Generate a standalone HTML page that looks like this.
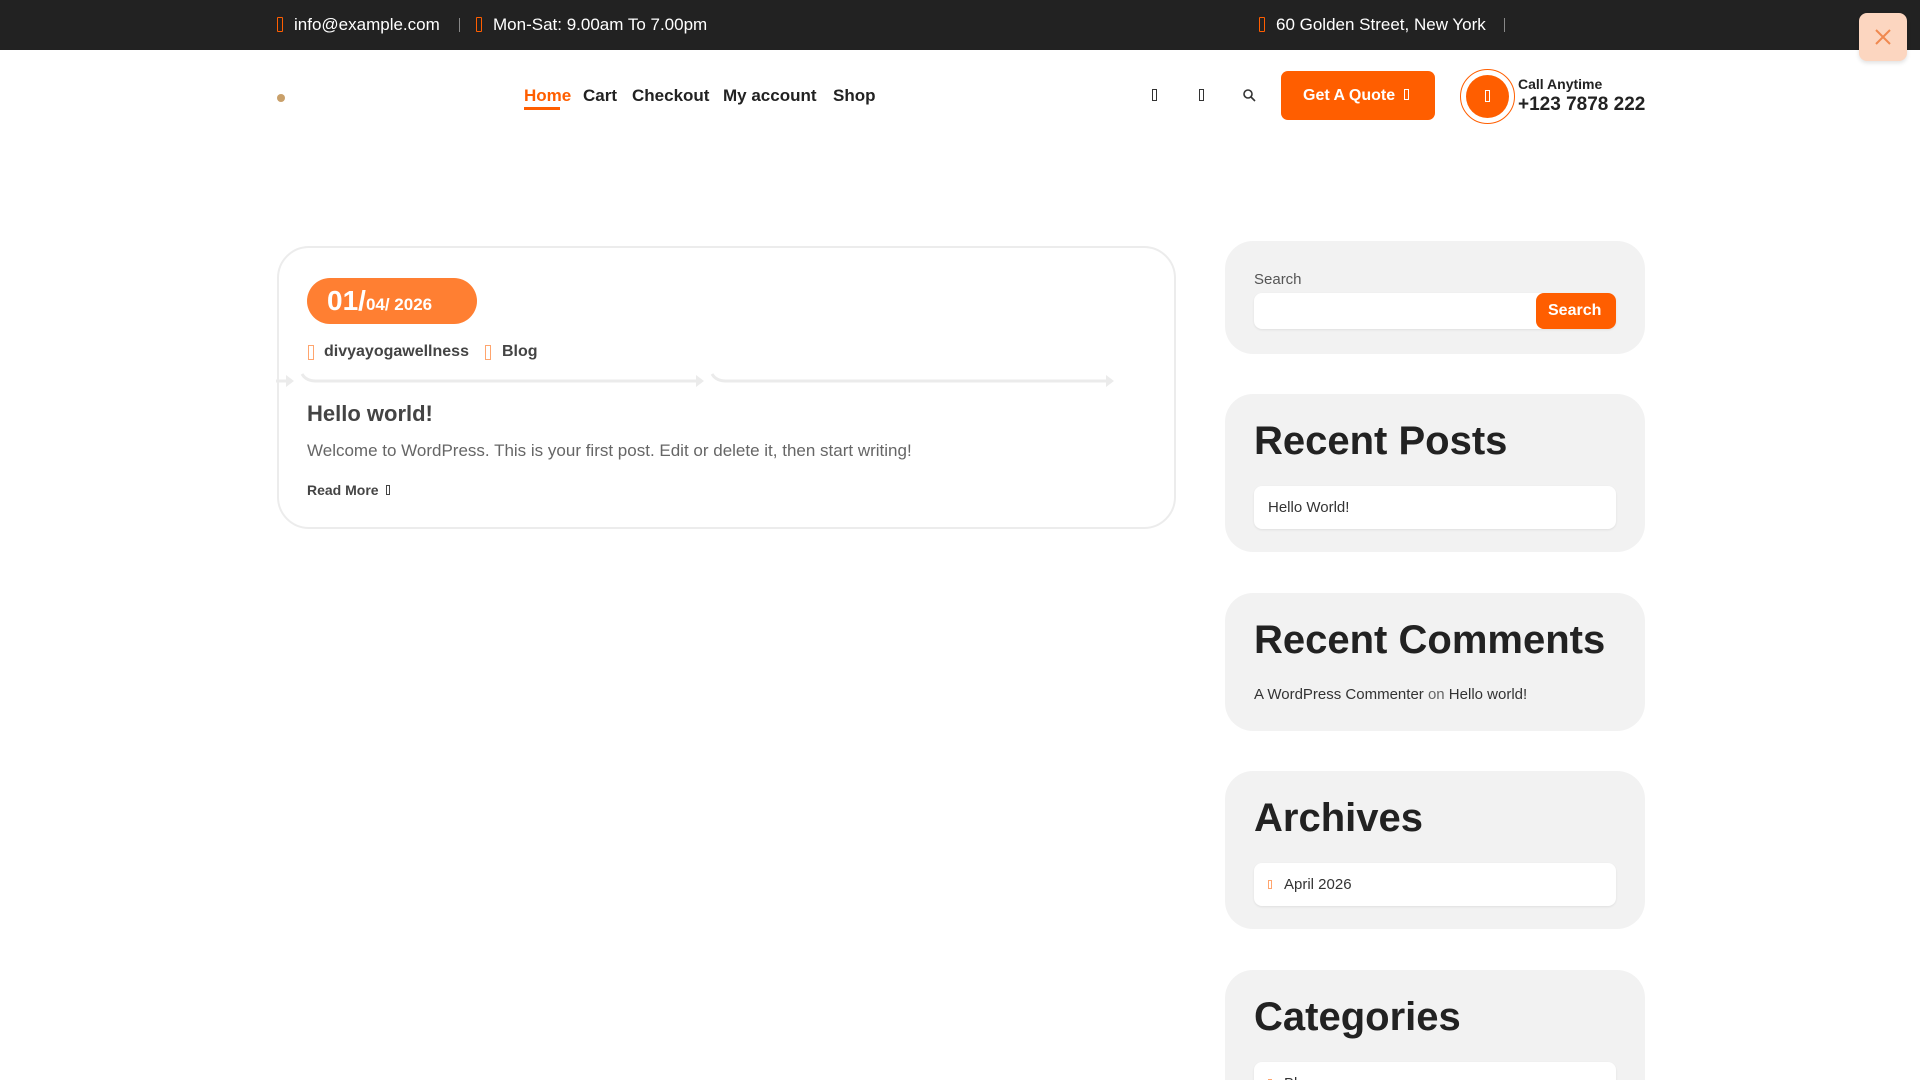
<!DOCTYPE html>
<html style="width:1920px;height:1080px;overflow:hidden"><head><meta charset="utf-8"><style>
*{margin:0;padding:0;box-sizing:border-box}
body{width:1920px;height:1080px;overflow:hidden;background:#fff;font-family:"Liberation Sans",sans-serif;color:#222;position:relative}
.a{position:absolute;white-space:nowrap}
.top{position:absolute;left:0;top:0;width:1920px;height:50px;background:#222}
.top .a{color:#fff;font-size:17px;top:15px}
.ic{display:inline-block;width:6px;height:15px;border:1.5px solid #ff5e00;border-radius:1px}
.sep{position:absolute;top:18px;width:1px;height:14px;background:#888}
.nav{font-size:17px;font-weight:bold;color:#222;top:86px}
.w{position:absolute;left:1225px;width:420px;background:#f2f2f2;border-radius:28px}
.wt{position:absolute;left:29px;font-size:40px;font-weight:bold;color:#222}
.box{position:absolute;left:29px;width:362px;height:43px;background:#fff;border-radius:8px;box-shadow:0 1px 2px rgba(0,0,0,.08);font-size:15px;color:#333;padding:13px 0 0 14px}
</style></head><body>
<div class="top">
<span class="a ic" style="left:277px;top:17px;position:absolute"></span>
<span class="a" style="left:294px">info@example.com</span>
<div class="sep" style="left:459px"></div>
<span class="a ic" style="left:476px;top:17px;position:absolute"></span>
<span class="a" style="left:493px">Mon-Sat: 9.00am To 7.00pm</span>
<span class="a ic" style="left:1259px;top:17px;position:absolute"></span>
<span class="a" style="left:1276px">60 Golden Street, New York</span>
<div class="sep" style="left:1504px"></div>
</div>
<div class="a" style="left:1859px;top:13px;width:48px;height:48px;background:#fcd6c0;border-radius:8px;box-shadow:0 2px 4px rgba(0,0,0,.12)">
<svg width="48" height="48" viewBox="0 0 48 48"><path d="M17 17L31 31M31 17L17 31" stroke="#f0894f" stroke-width="2"/></svg></div>
<div class="a" style="left:277px;top:94px;width:8px;height:8px;border-radius:50%;background:#c9a06a"></div>
<span class="a nav" style="left:524px;color:#ff5e00">Home</span>
<div class="a" style="left:524px;top:107px;width:36px;height:3px;background:#ff5e00"></div>
<span class="a nav" style="left:583px">Cart</span>
<span class="a nav" style="left:632px">Checkout</span>
<span class="a nav" style="left:723px">My account</span>
<span class="a nav" style="left:833px">Shop</span>
<span class="a" style="left:1152px;top:89px;width:5px;height:12px;border:1px solid #333"></span>
<span class="a" style="left:1199px;top:89px;width:5px;height:12px;border:1px solid #333"></span>
<svg class="a" style="left:1241px;top:87px" width="16" height="16" viewBox="0 0 16 16"><circle cx="7" cy="7" r="4" fill="none" stroke="#333" stroke-width="1.6"/><path d="M10 10L14 14" stroke="#333" stroke-width="1.6"/></svg>
<div class="a" style="left:1281px;top:71px;width:154px;height:49px;background:#ff5e00;border-radius:7px;color:#fff;font-size:16px;font-weight:bold;padding:16px 0 0 22px">Get A Quote &nbsp;<span style="display:inline-block;width:5px;height:11px;border:1px solid #fff"></span></div>
<div class="a" style="left:1460px;top:69px;width:55px;height:55px;border-radius:50%;border:1.5px solid #ff5e00"></div>
<div class="a" style="left:1466px;top:75px;width:43px;height:43px;border-radius:50%;background:#ff5e00"></div>
<span class="a" style="left:1485px;top:90px;width:5px;height:12px;border:1px solid #fff"></span>
<span class="a" style="left:1518px;top:76px;font-size:14px;font-weight:bold">Call Anytime</span>
<span class="a" style="left:1518px;top:94px;font-size:19px;font-weight:bold">+123 7878 222</span>

<div class="a" style="left:277px;top:246px;width:899px;height:283px;border:2px solid #ececec;border-radius:32px"></div>
<div class="a" style="left:307px;top:278px;width:170px;height:46px;background:#ff7f32;border-radius:23px;color:#fff;font-weight:bold;padding:7px 0 0 20px"><span style="font-size:28px">01/</span><span style="font-size:17px">04/ 2026</span></div>
<span class="a" style="left:308px;top:345px;width:6px;height:15px;border:1.5px solid #ffa56e"></span>
<span class="a" style="left:324px;top:343px;font-size:16px;font-weight:bold;color:#444">divyayogawellness</span>
<span class="a" style="left:485px;top:345px;width:6px;height:15px;border:1.5px solid #ffa56e"></span>
<span class="a" style="left:502px;top:343px;font-size:16px;font-weight:bold;color:#444">Blog</span>
<svg class="a" style="left:276px;top:370px" width="850" height="22"><g stroke="#ebebeb" stroke-width="3" fill="none"><path d="M0 11H10M26 4Q30 11 40 11H420M436 4Q440 11 450 11H830"/></g><g fill="#ebebeb"><path d="M10 5L18 11L10 17Z"/><path d="M420 5L428 11L420 17Z"/><path d="M830 5L838 11L830 17Z"/></g></svg>
<span class="a" style="left:307px;top:401px;font-size:22px;font-weight:bold;color:#444">Hello world!</span>
<span class="a" style="left:307px;top:441px;font-size:17px;color:#666">Welcome to WordPress. This is your first post. Edit or delete it, then start writing!</span>
<span class="a" style="left:307px;top:482px;font-size:14px;font-weight:bold;color:#444">Read More &nbsp;<span style="display:inline-block;width:4px;height:10px;border:1px solid #444"></span></span>

<div class="w" style="top:241px;height:113px">
<span class="a" style="left:29px;top:30px;font-size:15px;color:#555">Search</span>
<div class="a" style="left:29px;top:52px;width:362px;height:36px;background:#fff;border-radius:8px;box-shadow:0 1px 2px rgba(0,0,0,.08)"></div>
<div class="a" style="left:311px;top:52px;width:80px;height:36px;background:#ff5e00;border-radius:8px;color:#fff;font-size:16px;font-weight:bold;padding:9px 0 0 12px">Search</div>
</div>
<div class="w" style="top:394px;height:158px">
<span class="wt" style="top:25px">Recent Posts</span>
<div class="box" style="top:92px">Hello World!</div>
</div>
<div class="w" style="top:593px;height:138px">
<span class="wt" style="top:25px">Recent Comments</span>
<span class="a" style="left:29px;top:93px;font-size:15px;color:#333">A WordPress Commenter <span style="color:#666">on</span> Hello world!</span>
</div>
<div class="w" style="top:771px;height:158px">
<span class="wt" style="top:25px">Archives</span>
<div class="box" style="top:92px"><span style="display:inline-block;width:4px;height:9px;border:1px solid #ffa56e;margin-right:12px"></span>April 2026</div>
</div>
<div class="w" style="top:970px;height:110px;border-radius:28px 28px 0 0">
<span class="wt" style="top:25px">Categories</span>
<div class="box" style="top:92px"><span style="display:inline-block;width:4px;height:9px;border:1px solid #ffa56e;margin-right:12px"></span>Blog</div>
</div>
</body></html>
